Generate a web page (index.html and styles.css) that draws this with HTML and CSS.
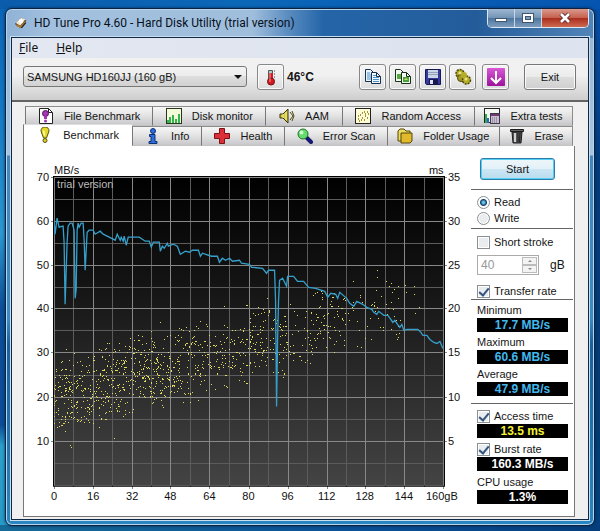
FILE: index.html
```
<!DOCTYPE html>
<html lang="en">
<head>
<meta charset="utf-8">
<title>HD Tune Pro 4.60 - Hard Disk Utility (trial version)</title>
<link rel="stylesheet" href="styles.css">
</head>
<body>
<main class="window">
  <header class="titlebar">
    <svg class="app-icon" viewBox="0 0 16 16"><path d="M1 9 8 2l6 3-6 9z" fill="#3a3028"/><path d="M2 8 8 2l5 2-6 7z" fill="#f1e6cb"/><path d="M3 9l4 2 6-6v3l-5 6-6-3z" fill="#a77832"/><circle cx="8" cy="6" r="2.5" fill="#fff"/><path d="M8 13l5-6 1 1-5 6z" fill="#201a18"/></svg>
    <h1 class="title">HD Tune Pro 4.60 - Hard Disk Utility (trial version)</h1>
    <div class="window-controls">
      <button class="win-btn" aria-label="Minimize"><svg viewBox="0 0 14 12"><rect x="1.500" y="6.500" width="11" height="3" fill="#fff" stroke="#40566e"/></svg></button>
      <button class="win-btn" aria-label="Maximize"><svg viewBox="0 0 14 12"><rect x="1.500" y="1.500" width="11" height="9" fill="#fff" stroke="#40566e"/><rect x="4.500" y="4.500" width="5" height="3" fill="#7e9cbc" stroke="#40566e"/></svg></button>
      <button class="win-btn close" aria-label="Close"><svg viewBox="0 0 14 12"><path d="M3 2l8 8M11 2l-8 8" stroke="#5b2a2a" stroke-width="4.500"/><path d="M3 2l8 8M11 2l-8 8" stroke="#fff" stroke-width="2.600"/></svg></button>
    </div>
  </header>
  <div class="client">
    <nav class="menubar"><a href="#"><u>F</u>ile</a><a href="#"><u>H</u>elp</a></nav>
    <div class="toolbar">
      <div class="drive"><select aria-label="Drive"><option>SAMSUNG HD160JJ (160 gB)</option></select></div>
      <button class="tool temp" aria-label="Temperature"><svg viewBox="0 0 18 18"><path d="M6.500 2.500h4v9h-4z" fill="#9fd0cc" stroke="#555"/><rect x="7" y="5" width="4" height="8" fill="#d41a20"/><circle cx="9" cy="13.500" r="3.500" fill="#d41a20" stroke="#701014"/><path d="M8 5v9" stroke="#ff9a9a"/><path d="M12 3h1M12 6h1M12 9h1" stroke="#444"/></svg></button>
      <output class="degrees">46°C</output>
      <div class="tools">
        <button class="tool" aria-label="Copy text"><svg viewBox="0 0 18 18"><path d="M1.500 1.500h5l3 3v9h-8z" fill="#e9f4fb" stroke="#173050"/><path d="M3 5h3M3 7h4M3 9h4M3 11h4" stroke="#4a91c8"/><path d="M7.500 4.500h5l4 4v7h-9z" fill="#f1f9ff" stroke="#173050"/><path d="M12.500 4.500v4h4" fill="none" stroke="#173050"/><path d="M9 7.500h3M9 9.500h6M9 11.500h6M9 13.500h6" stroke="#4a91c8"/></svg></button>
        <button class="tool" aria-label="Copy picture"><svg viewBox="0 0 18 18"><path d="M1.500 1.500h5l3 3v9h-8z" fill="#f3faf1" stroke="#17301a"/><path d="M3 6h5v5H3z" fill="#55a740"/><path d="M7.500 4.500h5l4 4v7h-9z" fill="#f3faf1" stroke="#17301a"/><path d="M12.500 4.500v4h4" fill="none" stroke="#17301a"/><path d="M9 9h6v5H9z" fill="#48a235"/><path d="M10 12l2-2 2 2z" fill="#c3e76c"/></svg></button>
        <button class="tool" aria-label="Save"><svg viewBox="0 0 18 18"><path d="M1.500 1.500h15v15h-14l-1-1z" fill="#343aa0" stroke="#16184e"/><path d="M4 2h10v8H4z" fill="#ccd5e6"/><path d="M4 4.500h10M4 6.500h10" stroke="#93a0ba"/><path d="M5 11h9v5H5z" fill="#16184e"/><path d="M6 12h3v4H6z" fill="#dde"/></svg></button>
        <button class="tool" aria-label="Options"><svg viewBox="0 0 18 18"><circle cx="6" cy="5.500" r="4" fill="#b5ad28" stroke="#4c480b" stroke-width="1.500" stroke-dasharray="2 1"/><circle cx="7" cy="10" r="3.500" fill="#a59d20" stroke="#4c480b"/><circle cx="12.500" cy="12" r="4" fill="#b5ad28" stroke="#4c480b" stroke-width="1.500" stroke-dasharray="2 1"/><circle cx="10" cy="7" r="3" fill="#b5ad28"/><circle cx="6" cy="5" r="1.500" fill="#e7e287"/><circle cx="12" cy="11" r="1.500" fill="#e7e287"/></svg></button>
        <button class="tool update" aria-label="Update"><svg viewBox="0 0 18 18"><defs><linearGradient id="pk" x2="0" y2="1"><stop stop-color="#d858d6"/><stop offset="1" stop-color="#9c129b"/></linearGradient></defs><rect width="18" height="18" rx="1" fill="url(#pk)"/><path d="M9 3v11M4 10l5 5 5-5" fill="none" stroke="#fff" stroke-width="2"/></svg></button>
        <button class="exit">Exit</button>
      </div>
    </div>
    <div class="body">
      <div class="tabs upper" role="tablist">
        <button role="tab"><svg viewBox="0 0 16 16"><path d="M1.500.5h9l4 4v11h-13z" fill="#fff" stroke="#222"/><path d="M10.500.5v4h4" fill="none" stroke="#222"/><circle cx="7.500" cy="5.500" r="3" fill="#a435b4" stroke="#4e145a"/><path d="M6 8h3v3H6z" fill="#a435b4"/><circle cx="7.500" cy="13" r="1.500" fill="#a435b4"/></svg>File Benchmark</button>
        <button role="tab"><svg viewBox="0 0 16 16"><rect x=".5" y=".5" width="15" height="15" fill="#f3fbd8" stroke="#263420"/><path d="M1 12h2V9h2v6H1zM6 7h2v8H6zM9 11h2v4H9zM12 6h2v9h-2z" fill="#34b64c"/></svg>Disk monitor</button>
        <button role="tab"><svg viewBox="0 0 16 16"><path d="M1 6h3l5-5v14l-5-5H1z" fill="#d2c63b" stroke="#373309"/><path d="M4 6v4M7 4v8" stroke="#f6efa0"/><path d="M11 4l3 4-3 4M13 3l2 5-2 5" fill="none" stroke="#4d4810"/></svg>AAM</button>
        <button role="tab"><svg viewBox="0 0 16 16"><rect x=".5" y=".5" width="15" height="15" fill="#fffbd4" stroke="#222"/><path d="M3 11h1M5 7h1M4 13h1M7 10h1M7 5h1M9 12h1M10 8h1M12 4h1M12 10h1M13 6h1M9 4h1M6 12h1M10 6h1M3 8h1" stroke="#83740e" stroke-width="1.500"/></svg>Random Access</button>
        <button role="tab"><svg viewBox="0 0 16 16"><rect x=".5" y=".5" width="15" height="14" fill="#f3f8f0" stroke="#222"/><path d="M1 6h2v9H1z" fill="#31a94e"/><path d="M3 10h2v5H3z" fill="#2e63c4"/><rect x="6.500" y="5.500" width="9" height="10" fill="#c8bfd0" stroke="#403848"/><path d="M7 7h8" stroke="#713b72" stroke-width="2"/><path d="M8 10h6M8 12h6M8 14h6" stroke="#716879" stroke-dasharray="1 1"/></svg>Extra tests</button>
      </div>
      <div class="tabs lower" role="tablist">
        <button role="tab" class="active" aria-selected="true"><svg viewBox="0 0 16 16"><path d="M8 0c3 0 4 2 4 4L9.500 11h-3L4 4c0-2 1-4 4-4z" fill="#e4d92a" stroke="#59530b"/><path d="M6.500 3.500l1 5" stroke="#fffcb0" stroke-width="1.500"/><circle cx="8" cy="13.500" r="2" fill="#dcd026" stroke="#59530b"/></svg>Benchmark</button>
        <button role="tab"><svg viewBox="0 0 16 16"><circle cx="8" cy="3" r="2.500" fill="#2b6ee0" stroke="#11306e"/><path d="M4.500 6.500H10v7h2v2H4v-2h2v-5H4.500z" fill="#2b6ee0" stroke="#11306e"/></svg>Info</button>
        <button role="tab"><svg viewBox="0 0 16 16"><path d="M5.500.5h5v5h5v5h-5v5h-5v-5h-5v-5h5z" fill="#db3038" stroke="#7b1118"/></svg>Health</button>
        <button role="tab"><svg viewBox="0 0 16 16"><path d="M9 9l5 5" stroke="#151770" stroke-width="4" stroke-linecap="round"/><circle cx="6" cy="6" r="5" fill="#65dc6b" stroke="#1b7426"/><circle cx="4.500" cy="4.500" r="2" fill="#cffad0"/></svg>Error Scan</button>
        <button role="tab"><svg viewBox="0 0 16 16"><path d="M1 3l2-2h4l2 2h4v10H1z" fill="#eadc60" stroke="#554509"/><path d="M4 5h11v8l-2 2H4z" fill="#e1b92c" stroke="#554509"/></svg>Folder Usage</button>
        <button role="tab"><svg viewBox="0 0 16 16"><path d="M3 4h10l-1 11H4z" fill="#555" stroke="#1c1c1c"/><path d="M6 5v9" stroke="#d0d0d0" stroke-width="2"/><path d="M9 5v9M11 5l-.5 9" stroke="#222"/><path d="M1.500 1.500h13v2h-13z" fill="#666" stroke="#1c1c1c"/></svg>Erase</button>
      </div>
      <section class="panel">
        <svg class="chart" id="chart" viewBox="25 146 446 369" role="img" aria-label="Transfer rate and access time">
          <defs><linearGradient id="plot-bg" x2="0" y2="1"><stop stop-color="#000"/><stop offset=".35" stop-color="#141414"/><stop offset="1" stop-color="#444"/></linearGradient></defs>
          <rect x="54" y="176" width="391" height="309" fill="url(#plot-bg)"/>
          <g id="grid"></g>
          <path id="dots" class="dots"/>
          <path class="rate" d="M55 221L56 234L57 226L58 218L60 227L64 226L65 242L66 304L68 242L69 226L71 223H73L75 230L76 298L77 290L78 230L79 223L80 227L82 223H84L85 240L86 270L88 232L90 230L94 230L96 234L101 231L104 234L112 238L116 240L118 234L121 240L122 237L124 241L125 236L127 245L129 237L140 237L146 241H150L152 247L154 242L160 242L161 251L163 246L165 248L168 243L169 246L174 244L178 246L181 254L186 251L190 252L193 250L199 250L201 256L203 253L212 256H218L220 262L223 258L226 260L230 258L233 261L240 260L242 263L250 264L252 267L263 268L267 273L269 270H275L276 300L277 406L278 340L279 300L280 280L283 278L287 286L288 276H294L298 281H304L309 287L316 288L325 291L328 297L331 293L336 294L338 298L340 292L347 298L350 303L354 306L357 301L363 304L367 307L372 309L374 312L377 314L379 311L384 315L388 315L391 319L393 322L395 320L397 323L400 327L402 324L404 330L407 329H418L421 332L423 335L427 335L430 339L434 342L437 343L440 341L443 348"/>
          <text class="trial" x="58" y="188">trial version</text>
          <text x="55" y="174">MB/s</text><text x="429" y="174">ms</text>
          <g id="labels"></g>
          <path d="M54 485.500h391M54.500 176v309M444.500 176v309M54 176.500h391" stroke="#000"/>
        </svg>
        <form class="side">
          <div class="group start-group"><button type="button" class="start">Start</button></div>
          <div class="group modes">
            <label><input type="radio" name="mode" checked>Read</label>
            <label><input type="radio" name="mode">Write</label>
          </div>
          <div class="group options">
            <label><input type="checkbox">Short stroke</label>
            <div class="size"><span class="spin"><input type="text" id="size" value="40" disabled><span class="arrows"><button type="button" disabled aria-label="Increase"><svg viewBox="0 0 6 4"><path d="M1 3l2-2 2 2z"/></svg></button><button type="button" disabled aria-label="Decrease"><svg viewBox="0 0 6 4"><path d="M1 1l2 2 2-2z"/></svg></button></span></span><label for="size">gB</label></div>
            <label><input type="checkbox" checked>Transfer rate</label>
          </div>
          <div class="group rates">
            <div class="caption">Minimum</div><output>17.7 MB/s</output>
            <div class="caption">Maximum</div><output>60.6 MB/s</output>
            <div class="caption">Average</div><output>47.9 MB/s</output>
          </div>
          <div class="group extras">
            <label><input type="checkbox" checked>Access time</label><output class="yellow">13.5 ms</output>
            <label><input type="checkbox" checked>Burst rate</label><output class="white">160.3 MB/s</output>
            <div class="caption">CPU usage</div><output class="white">1.3%</output>
          </div>
        </form>
      </section>
    </div>
  </div>
</main>
<script src="script.js"></script>
</body>
</html>
```
FILE: styles.css
```
* { box-sizing: border-box; }
body {
  margin: 0;
  padding: 8px 5px 5px;
  min-height: 100vh;
  font: 11px/14px "Liberation Sans", Arial, sans-serif;
  color: #151515;
  background:
    linear-gradient(90deg, #0b5cab, #0b67b8 40%, #0555b0) top / 100% 9px no-repeat,
    linear-gradient(90deg, #166a96, #0a5096 60%, #063e7c) bottom / 100% 6px no-repeat,
    linear-gradient(#0a62b4, #1378c2 20%, #2c97d0 44%, #0b4f98 58%, #0b4c96 80%, #2ba0cb 84%, #259ac8) left / 50% 100% no-repeat,
    linear-gradient(#0650a8, #033c7c 30%, #063b74 80%, #04407f);
}
button, input, select { font: inherit; color: inherit; margin: 0; padding: 0; }
svg { display: block; }
.window {
  border: 1px solid #0b2340;
  border-radius: 7px;
  padding: 0 5px 5px;
  box-shadow: inset 0 0 0 1px #b5d4ee, 0 0 3px #062a50;
  background:
    linear-gradient(90deg, #8fb2d6, #a3c1df 8%, #9fbedc 42%, #5a8cc0 48%, #2465a8 54%, #245c9a 80%, #5284b8) top / 100% 29px no-repeat,
    linear-gradient(#96b6d4, #a9c4dd 146px, #4288bd 147px, #3a8bc5 60%, #17629e 65%, #2a86c0);
}
.titlebar { display: flex; align-items: center; height: 28px; padding-left: 3px; }
.app-icon { width: 14px; height: 16px; }
.title { margin: 0 auto 0 6px; font: 12px/16px Roboto, sans-serif; color: #08101c; white-space: nowrap; }
.window-controls { display: flex; align-self: flex-start; border: 1px solid #dbe8f4; border-top: 0; border-radius: 0 0 5px 5px; overflow: hidden; }
.win-btn { display: grid; place-items: center; width: 27px; height: 18px; border: 0; border-right: 1px solid #c5d7e8; background: linear-gradient(#9eb8d2, #7594b5 48%, #4d749d 50%, #7e9dbd); }
.win-btn svg { width: 14px; height: 12px; }
.close { width: 46px; border: 0; background: linear-gradient(#d99a8d, #c6614f 48%, #a92c1c 50%, #ce6a50); }
.client { border: 1px solid #102a46; outline: 1px solid #c9def0; background: #f0f0f0; }
.menubar { display: flex; gap: 18px; height: 20px; padding: 2px 7px; background: linear-gradient(90deg, #e2e7f1, #dde3ef); font: 12px/16px "Noto Sans", sans-serif; }
.menubar a { color: #111; text-decoration: none; }
.toolbar { display: flex; align-items: center; height: 44px; padding: 0 12px 5px 11px; border-bottom: 2px solid #646464; background: linear-gradient(#f1f1f1, #f1f1f1 40%, #cecece); }
.drive { position: relative; flex: 0 1 224px; margin-right: 10px; }
.drive::after { content: ""; position: absolute; right: 5px; top: 9px; border: 4px solid transparent; border-top-color: #111; border-bottom: 0; pointer-events: none; }
.drive select { display: block; width: 100%; height: 21px; padding: 0 3px; appearance: none; border: 1px solid #777; border-radius: 3px; background: linear-gradient(#f3f3f3, #ececec 48%, #dedede 50%, #d2d2d2); font-size: 11px; }
.tool { display: grid; place-items: center; width: 27px; height: 26px; border: 1px solid #888; border-radius: 3px; background: linear-gradient(#f5f5f5, #ececec 50%, #dcdcdc); box-shadow: inset 0 0 0 1px #fafafa; }
.tool svg { width: 18px; height: 18px; }
.degrees { margin-left: 3px; font-size: 12px; font-weight: bold; }
.tools { display: flex; gap: 3px; margin-left: auto; }
.update { margin-left: 3px; }
.exit { width: 52px; margin-left: 12px; border: 1px solid #777; border-radius: 3px; background: linear-gradient(#f4f4f4, #ebebeb 48%, #dddddd 50%, #cfcfcf); box-shadow: inset 0 0 0 1px #fafafa; }
.body { padding: 4px 13px 2px 11px; }
.tabs { display: grid; }
.tabs button { display: flex; align-items: center; justify-content: center; gap: 10px; height: 20px; border: 1px solid #8c8c8c; border-left-color: #777; border-right-width: 0; border-bottom-color: #c3c3c3; background: linear-gradient(#f6f6f6, #e4e4e4 45%, #c8c8cc); font-size: 11px; white-space: nowrap; }
.tabs button:last-child { border-right-width: 1px; }
.tabs svg { flex: none; width: 16px; height: 16px; }
.upper { grid-template-columns: 127fr 113fr 76fr 132fr 99fr; margin: 0 2px; }
.lower { grid-template-columns: 109fr 69fr 83fr 102fr 112fr 74fr; margin-right: 2px; }
.lower .active { height: 22px; margin: -2px 0 0; padding-bottom: 2px; border-top-color: #ddd; border-bottom: 0; background: #fff; }
.panel { display: grid; grid-template-columns: 1fr 103px; border: 1px solid #777; border-top: 0; background: #fff; }
.chart { width: 100%; height: auto; }
.chart text { font: 11px "Liberation Sans", sans-serif; fill: #111; }
.chart .left { text-anchor: end; }
.chart .middle { text-anchor: middle; }
.chart .trial { fill: #bbb; }
.rate { fill: none; stroke: #36a0cb; stroke-width: 1.300; }
.dots { stroke: #e2da5c; stroke-width: 1; shape-rendering: crispEdges; }
.major { stroke: #888; shape-rendering: crispEdges; }
.minor { stroke: #5c5c5c; shape-rendering: crispEdges; }
.side { padding-right: 1px; font-size: 11px; }
.group { padding: 0 5px 0 6px; border-bottom: 1px solid #666; }
.group:last-child { border: 0; }
.start-group { height: 44px; padding: 12px 18px 0 9px; }
.start { display: block; width: 100%; height: 22px; border: 1px solid #2d7ba6; border-radius: 3px; box-shadow: inset 0 0 0 1px #55d0f5; background: linear-gradient(#eef6fa, #e2f1f8 48%, #cbe6f3 50%, #b9dcee); }
.group label { display: flex; align-items: center; gap: 4px; height: 16px; white-space: nowrap; }
.modes { height: 39px; padding-top: 4px; }
.options { height: 71px; padding-top: 5px; }
input[type="checkbox"], input[type="radio"] { display: grid; place-items: center; flex: none; width: 13px; height: 13px; appearance: none; border: 1px solid #8a8f94; background: #e9edf0; box-shadow: inset 0 0 0 1px #fff; }
input[type="radio"] { border-radius: 50%; }
input[type="radio"]:checked { background: radial-gradient(circle, #65c2e8 0 1px, #133f6b 3px, #fff 4px); }
input[type="checkbox"]:checked::after { content: ""; width: 4px; height: 8px; margin-bottom: 2px; border: solid #35547e; border-width: 0 2px 2px 0; transform: rotate(40deg); }
.size { display: flex; align-items: center; gap: 11px; margin: 5px 0 8px; font-size: 12px; }
.spin { display: flex; width: 62px; height: 20px; padding: 1px; border: 1px solid #aaa; background: #fff; }
.spin input { width: 43px; padding-left: 2px; border: 0; background: transparent; color: #999; }
.arrows { display: grid; flex: 1; }
.arrows button { display: grid; place-items: center; border: 1px solid #bbb; background: #f3f3f3; }
.arrows svg { width: 6px; height: 4px; fill: #888; }
.rates { height: 104px; padding-top: 2px; }
.caption { height: 16px; line-height: 16px; }
.group output { display: block; width: 91px; height: 14px; margin-bottom: 2px; background: #000; color: #42b8ee; font: bold 12px/14px "Liberation Sans", sans-serif; text-align: center; }
.group .yellow { color: #f6f230; }
.group .white { color: #fff; }
.extras { padding-top: 4px; }
.extras output { margin-bottom: 3px; }
```
FILE: script.js
```
const NS = "http://www.w3.org/2000/svg";
const left = 55, top0 = 177, colW = 19.4, rowH = 21.9;
const grid = document.getElementById("grid");
const labels = document.getElementById("labels");

function line(d, cls) {
  const p = document.createElementNS(NS, "path");
  p.setAttribute("d", d);
  p.setAttribute("class", cls);
  grid.append(p);
}
function label(text, x, y, cls) {
  const t = document.createElementNS(NS, "text");
  t.setAttribute("x", x);
  t.setAttribute("y", y);
  t.setAttribute("class", cls);
  t.textContent = text;
  labels.append(t);
}

for (const odd of [1, 0]) {
  const cls = odd ? "minor" : "major";
  for (let i = odd; i <= 20; i += 2) line(`M${Math.round(left + i * colW) + 0.5} 177v${odd ? 309 : 311}`, cls);
  for (let i = odd; i < 14; i += 2) line(`M${odd ? 54 : 52} ${Math.round(top0 + i * rowH) + 0.5}H${odd ? 445 : 447}`, cls);
}
for (let i = 0; i < 7; i++) {
  const y = Math.round(top0 + i * 2 * rowH) + 4;
  label(70 - i * 10, 50, y, "left");
  label(35 - i * 5, 448, y, "right");
}
for (let i = 0; i <= 10; i++) label(i === 10 ? "160gB" : i * 16, Math.round(left + i * 2 * colW) + (i === 10 ? -1 : 0), 499, "middle");

// Access time samples: [from x, to x, count]
const bands = [[55, 115, 290], [115, 185, 330], [185, 250, 190], [250, 290, 120], [290, 345, 105], [345, 400, 50], [400, 420, 5]];
let seed = 4607;
const random = () => (seed = (seed * 16807) % 2147483647) / 2147483647;
let d = "";
for (const [from, to, count] of bands) {
  for (let i = 0; i < count; i++) {
    const x = from + random() * (to - from);
    const high = 354 - (x - left) * 0.25;
    const low = 440 - (x - left) * 0.27;
    const y = high + (0.65 * random() + 0.35 * random()) * (low - high);
    d += `M${Math.floor(x)} ${Math.floor(y)}.5h1`;
  }
}
for (const [x, y] of [[377, 270], [377, 277], [353, 281], [386, 281], [391, 283], [389, 286], [405, 285], [414, 286], [419, 307], [225, 306], [247, 305], [267, 298], [161, 322], [67, 349], [108, 343], [71, 444], [72, 446], [115, 437]]) d += `M${x} ${y}.5h1`;
document.getElementById("dots").setAttribute("d", d);
```
